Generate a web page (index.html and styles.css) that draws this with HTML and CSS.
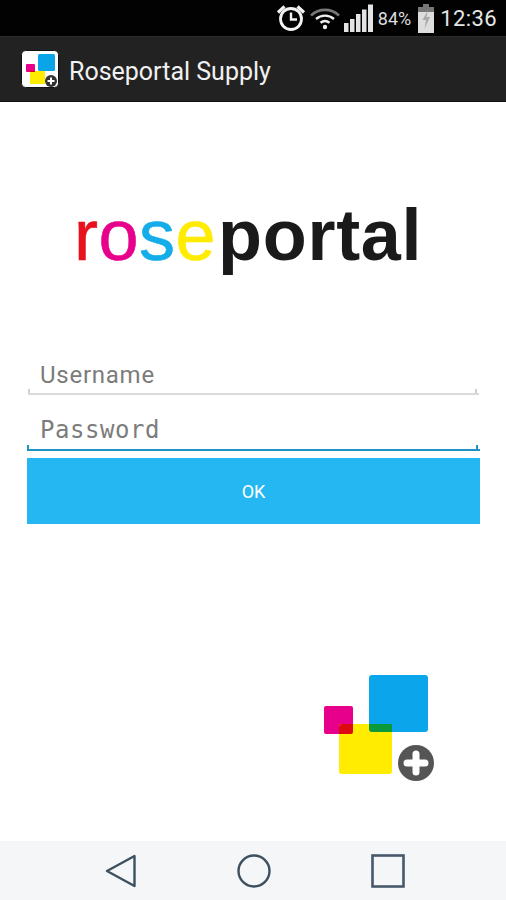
FILE: index.html
```html
<!DOCTYPE html>
<html lang="en">
<head>
<meta charset="utf-8">
<title>Roseportal Supply</title>
<link rel="stylesheet" href="styles.css">
</head>
<body>
<div class="screen">
  <header class="status">
    <svg class="ic-alarm" width="30" height="30" viewBox="0 0 30 30" fill="none" stroke="#f2f2f2">
      <circle cx="15" cy="16" r="10.500" stroke-width="2.800"/>
      <path d="M15 9.500V16.500H21" stroke-width="2.400"/>
      <path d="M2 9.500 8.500 3.500M28 9.500 21.500 3.500" stroke-width="3.200"/>
    </svg>
    <svg class="ic-wifi" width="30" height="24" viewBox="0 0 30 24" fill="none">
      <path d="M1 9.500C9 2 21 2 29 9.500" stroke="#777" stroke-width="2.600"/>
      <path d="M6 13C11.300 8.500 18.700 8.500 24 13" stroke="#eee" stroke-width="2.400"/>
      <path d="M10.500 16.800C13.200 14.600 16.800 14.600 19.500 16.800" stroke="#eee" stroke-width="2.400"/>
      <circle cx="15" cy="21" r="2.200" fill="#eee"/>
    </svg>
    <svg class="ic-signal" width="30" height="29" viewBox="0 0 30 29" fill="#e4e4e4">
      <rect x="0" y="19" width="4.500" height="9"/>
      <rect x="6" y="15" width="4.500" height="13"/>
      <rect x="12" y="10" width="4.500" height="18"/>
      <rect x="18" y="5.500" width="4.500" height="22.500"/>
      <rect x="24" y="0.500" width="5" height="27.500"/>
    </svg>
    <span class="pct">84%</span>
    <svg class="ic-batt" width="16" height="29" viewBox="0 0 16 29">
      <rect x="5" y="0" width="6" height="3" fill="#777"/>
      <rect x="0" y="3" width="16" height="5" fill="#777"/>
      <rect x="0" y="8" width="16" height="21" fill="#ddd"/>
      <path d="M10 6 4.500 16H8L6.500 25 12 13H8.500Z" fill="#aaa"/>
    </svg>
    <span class="clock">12:36</span>
  </header>

  <div class="appbar">
    <svg class="app-icon" width="38" height="38" viewBox="0 0 38 38">
      <rect x="0.500" y="0.500" width="37" height="37" rx="4" fill="#fff" stroke="#111"/>
      <rect x="17" y="4" width="17" height="17" rx="1.500" fill="#0aa5e8"/>
      <rect x="5" y="14" width="9" height="8" rx="1" fill="#e6008c"/>
      <rect x="9" y="21" width="15" height="13" fill="#ffec00"/>
      <rect x="9" y="21" width="5" height="1" fill="#e00000"/>
      <circle cx="30" cy="31" r="6" fill="#333"/>
      <path d="M30 27.500V34.500M26.500 31H33.500" stroke="#fff" stroke-width="2"/>
    </svg>
    <h1 class="app-title">Roseportal Supply</h1>
  </div>

  <main class="content">
    <div class="logo"><span class="c-r">r</span><span class="c-o">o</span><span class="c-s">s</span><span class="c-e">e</span><span class="dark">portal</span></div>

    <form class="form">
      <label class="field"><span class="ph ph-user">Username</span></label>
      <label class="field field-active"><span class="ph ph-pass">Password</span></label>
      <button class="ok" type="button">OK</button>
    </form>

    <div class="mark-row">
      <svg class="mark" width="112" height="108" viewBox="0 0 112 108">
        <rect x="46" y="1" width="59" height="57" rx="3" fill="#0aa5ea"/>
        <rect x="1" y="32" width="29" height="28" rx="2" fill="#e6008c"/>
        <rect x="16" y="50" width="53" height="50" rx="3" fill="#ffec00"/>
        <path d="M16 53a3 3 0 0 1 3-3H30V58a2 2 0 0 1-2 2H16Z" fill="#dd0a10"/>
        <path d="M46 50H69V58H49a3 3 0 0 1-3-3Z" fill="#0a9a3c"/>
        <circle cx="93" cy="89" r="18" fill="#555"/>
        <path d="M93 80V98M84 89H102" stroke="#fff" stroke-width="7" stroke-linecap="round"/>
      </svg>
    </div>
  </main>

  <nav class="navbar">
    <svg width="32" height="34" viewBox="0 0 32 34" fill="none" stroke="#3d5060" stroke-width="2.400" stroke-linejoin="round"><path d="M29.500 2V32L2 17Z"/></svg>
    <svg width="34" height="34" viewBox="0 0 34 34" fill="none" stroke="#3d5060" stroke-width="2.400"><circle cx="17" cy="17" r="15.500"/></svg>
    <svg width="34" height="34" viewBox="0 0 34 34" fill="none" stroke="#46586a" stroke-width="2.600"><rect x="1.500" y="1.500" width="31" height="31"/></svg>
  </nav>
</div>
</body>
</html>
```
FILE: styles.css
```css
* { box-sizing: border-box; }
html, body { margin: 0; padding: 0; }
body { font-family: Roboto, "Liberation Sans", sans-serif; background: #fff; }
.screen { width: 506px; height: 900px; display: flex; flex-direction: column; overflow: hidden; }

.status { height: 36px; flex: none; background: #020202; display: flex; align-items: center; justify-content: flex-end; padding-right: 9px; color: #eee; }
.ic-alarm { margin-right: 4px; }
.ic-wifi { margin-right: 4px; }
.ic-signal { margin-right: 4px; }
.pct { font-size: 18px; margin-right: 7px; color: #ddd; }
.ic-batt { margin-right: 6px; }
.clock { font-size: 22px; letter-spacing: 0.4px; color: #e6e6e6; }

.appbar { height: 66px; flex: none; background: #222; border-top: 1px solid #2b2b2b; border-bottom: 1px solid #111; display: flex; align-items: center; padding: 0 0 0 21px; gap: 10px; }
.app-icon { flex: none; }
.app-title { margin: 0; padding-top: 5px; font-size: 25px; font-weight: 400; color: #f1f1f1; }

.content { flex: 1; display: flex; flex-direction: column; background: #fff; }
.logo { font-family: "Liberation Sans", Arial, sans-serif; font-size: 72px; line-height: 84px; height: 84px; margin: 91px 0 0 74px; letter-spacing: 0.5px; white-space: nowrap; -webkit-text-stroke: 0.6px currentColor; }
.c-r { color: #e8121c; }
.c-o { color: #e6008c; }
.c-s { color: #15ade9; }
.c-e { color: #ffec00; }
.dark { color: #1a1a1a; font-weight: 700; margin-left: 2px; letter-spacing: 0.7px; -webkit-text-stroke: 0; }

.form { margin: 82px 26px 0 27px; display: flex; flex-direction: column; }
.field { position: relative; height: 56px; margin: 0 1px; display: flex; align-items: flex-end; padding: 0 0 4px 12px; border-bottom: 2px solid #dadada; }
.field:first-child { height: 36px; }
.field::before, .field::after { content: ""; position: absolute; bottom: 0; width: 2px; height: 4px; background: inherit; border-left: 2px solid #cfcfcf; }
.field::before { left: 0; }
.field::after { right: 0; }
.field-active::before, .field-active::after { border-left-color: #1f93c4; }
.ph { color: #7c7c7c; }
.ph-user { font-size: 24px; line-height: 28px; font-family: Roboto, sans-serif; letter-spacing: 0.75px; }
.ph-pass { font-size: 24px; line-height: 30px; font-family: "DejaVu Sans Mono", monospace; letter-spacing: 0.55px; font-weight: 400; }
.field-active { margin: 0; border-bottom-color: #1f93c4; padding-left: 13px; }
.ok { height: 66px; margin-top: 7px; border: 0; padding: 0; background: #25b7f1; color: #fff; font-family: Roboto, sans-serif; font-size: 18px; }

.mark-row { margin-top: 150px; display: flex; justify-content: flex-end; padding-right: 71px; }
.mark { display: block; }

.navbar { height: 59px; flex: none; background: #f5f6f7; display: flex; align-items: center; justify-content: flex-start; gap: 100px; padding-left: 105px; }
```
